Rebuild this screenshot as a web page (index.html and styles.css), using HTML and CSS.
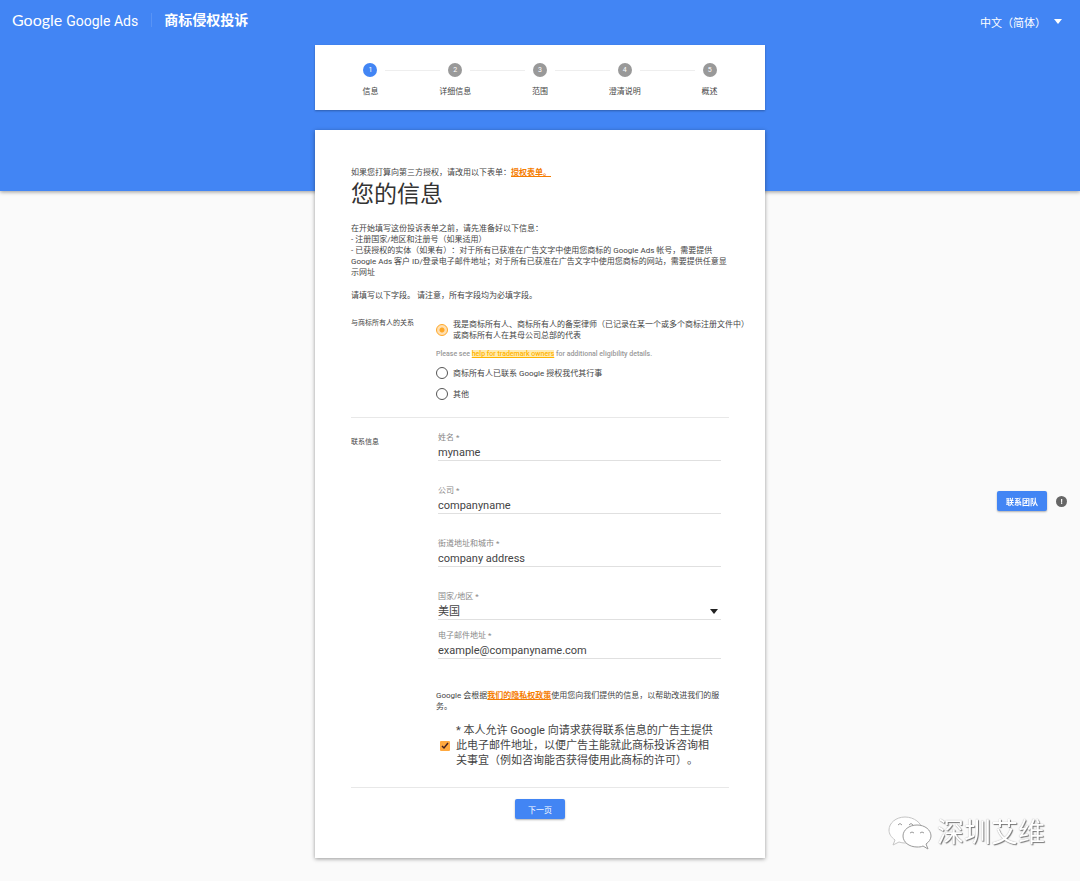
FILE: index.html
```html
<!DOCTYPE html>
<html lang="zh-CN">
  <head>
    <meta charset="UTF-8" />
    <meta name="viewport" content="width=device-width, initial-scale=1.0" />
    <title>商标侵权投诉 - Google Ads</title>
    <link rel="stylesheet" href="styles.css">
  </head>
  <body>
    <header class="hero">
      <div class="topbar">
        <a class="brand" href="#"><span class="logo">Google</span> Google Ads</a>
        <h1 class="page-name">商标侵权投诉</h1>
        <button type="button" class="language">中文（简体）<span class="caret"></span></button>
      </div>
    </header>

    <main class="container">
      <ol class="stepper">
        <li class="step active"><span class="track"><span class="dot">1</span></span>信息</li>
        <li class="step"><span class="track"><span class="dot">2</span></span>详细信息</li>
        <li class="step"><span class="track"><span class="dot">3</span></span>范围</li>
        <li class="step"><span class="track"><span class="dot">4</span></span>澄清说明</li>
        <li class="step"><span class="track"><span class="dot">5</span></span>概述</li>
      </ol>

      <form class="card">
        <p>如果您打算向第三方授权，请改用以下表单：<a class="link" href="#">授权表单。</a></p>
        <h2>您的信息</h2>
        <p class="intro">
          在开始填写这份投诉表单之前，请先准备好以下信息：<br />
          - 注册国家/地区和注册号（如果适用）<br />
          - 已获授权的实体（如果有）：对于所有已获准在广告文字中使用您商标的 Google Ads 帐号，需要提供<br />
          Google Ads 客户 ID/登录电子邮件地址；对于所有已获准在广告文字中使用您商标的网站，需要提供任意显<br />
          示网址
        </p>
        <p class="intro">请填写以下字段。 请注意，所有字段均为必填字段。</p>

        <section class="row relation" role="radiogroup" aria-labelledby="relation-title">
          <h3 id="relation-title">与商标所有人的关系</h3>
          <div class="options">
            <label class="option">
              <input type="radio" name="relation" checked />
              <span>我是商标所有人、商标所有人的备案律师（已记录在某一个或多个商标注册文件中）<br />或商标所有人在其母公司总部的代表</span>
            </label>
            <p class="hint">Please see <a href="#">help for trademark owners</a> for additional eligibility details.</p>
            <label class="option">
              <input type="radio" name="relation" />
              <span>商标所有人已联系 Google 授权我代其行事</span>
            </label>
            <label class="option">
              <input type="radio" name="relation" />
              <span>其他</span>
            </label>
          </div>
        </section>

        <section class="row contact">
          <h3>联系信息</h3>
          <div>
            <div class="field">
              <label for="name">姓名 *</label>
              <input type="text" id="name" value="myname" />
            </div>
            <div class="field">
              <label for="company">公司 *</label>
              <input type="text" id="company" value="companyname" />
            </div>
            <div class="field">
              <label for="address">街道地址和城市 *</label>
              <input type="text" id="address" value="company address" />
            </div>
            <div class="field field-select">
              <label for="country">国家/地区 *</label>
              <select id="country">
                <option>美国</option>
              </select>
            </div>
            <div class="field">
              <label for="email">电子邮件地址 *</label>
              <input type="email" id="email" value="example@companyname.com" />
            </div>

            <p class="privacy">Google 会根据<a class="link" href="#">我们的隐私权政策</a>使用您向我们提供的信息，以帮助改进我们的服务。</p>

            <label class="consent">
              <input type="checkbox" checked />
              <span>* 本人允许 Google 向请求获得联系信息的广告主提供此电子邮件地址，以便广告主能就此商标投诉咨询相关事宜（例如咨询能否获得使用此商标的许可）。</span>
            </label>
          </div>
        </section>

        <div class="actions">
          <button type="button" class="btn">下一页</button>
        </div>
      </form>
    </main>

    <aside class="support">
      <button type="button" class="btn">联系团队</button>
      <span class="info">!</span>
    </aside>

    <div class="watermark">
      <svg width="44" height="36" viewBox="0 0 44 36" fill="#fff" stroke="#999" stroke-width="1">
        <path d="M17 2C8 2 1 8 1 15c0 4 2 7 6 10l-2 5 6-3c3 1 5 1 8 1 9 0 15-6 15-13S26 2 17 2z" stroke="#c4c4c4" />
        <path d="M29 10c-8 0-14 5-14 11s6 11 14 11c2 0 4 0 6-1l5 3-2-5c3-2 5-5 5-8 0-6-6-11-14-11z" />
        <path d="M10 10q2-3 4 0M21 10q2-3 4 0M22 18q2-2 4 0M32 18q2-2 4 0" fill="none" />
      </svg>
      <span>深圳艾维</span>
    </div>
  </body>
</html>
```
FILE: styles.css
```css
* {
  box-sizing: border-box;
}

body {
  margin: 0;
  background-color: #fafafa;
  color: #444;
  font-family: Roboto, "Noto Sans CJK SC", sans-serif;
  font-size: 8px;
  line-height: 11px;
  text-spacing-trim: space-all;
}

h1,
h2,
h3,
p,
ol {
  margin: 0;
  padding: 0;
}

button,
input,
select {
  font-family: inherit;
  margin: 0;
}

.hero {
  background-color: #4285f4;
  min-height: 191px;
  box-shadow: 0 1px 4px rgba(0, 0, 0, 0.4);
}

.topbar {
  display: flex;
  align-items: center;
  height: 40px;
  padding: 0 18px 0 12px;
  color: #fff;
}

.brand {
  display: flex;
  align-items: baseline;
  gap: 4px;
  color: #fff;
  font-size: 14px;
  line-height: 20px;
  text-decoration: none;
}

.logo {
  font-family: Lato, sans-serif;
  font-size: 16px;
}

.page-name {
  margin-left: 13px;
  padding-left: 12px;
  border-left: 1px solid #5893f5;
  font-size: 14px;
  line-height: 14px;
}

.language {
  display: flex;
  align-items: center;
  gap: 8px;
  margin-left: auto;
  padding: 3px 0 0;
  border: none;
  background: none;
  color: #fff;
  font-size: 11px;
  cursor: pointer;
}

.caret {
  border: 4px solid transparent;
  border-top: 5px solid #fff;
  border-bottom: none;
}

.container {
  max-width: 450px;
  margin: -146px auto 22px;
}

.stepper {
  display: flex;
  padding: 18px 13px 13px;
  background-color: #fff;
  list-style: none;
  box-shadow: 0 1px 2px rgba(0, 0, 0, 0.3);
}

.step {
  flex: 1;
  text-align: center;
}

.track {
  display: flex;
  align-items: center;
  gap: 8px;
  margin-bottom: 9px;
}

.track::before,
.track::after {
  content: "";
  flex: 1;
  height: 1px;
  background-color: #eee;
}

.step:first-child .track::before,
.step:last-child .track::after {
  background: none;
}

.dot {
  width: 14px;
  height: 14px;
  border-radius: 50%;
  background-color: #999;
  color: #fff;
  font-size: 7px;
  line-height: 14px;
}

.active .dot {
  background-color: #4285f4;
}

.card {
  margin-top: 20px;
  padding: 37px 36px 39px;
  background-color: #fff;
  box-shadow: 0 1px 4px rgba(0, 0, 0, 0.4);
}

h2 {
  margin: 2px 0 13px;
  color: #333;
  font-size: 23px;
  font-weight: 400;
  line-height: 30px;
}

.intro {
  margin-bottom: 12px;
  white-space: nowrap;
}

.link {
  color: #f57c00;
  font-weight: 700;
}

.row {
  display: grid;
  grid-template-columns: 85px 1fr;
  border-bottom: 1px solid #e8e8e8;
}

h3 {
  font-size: 7px;
  font-weight: 400;
  line-height: 12px;
  white-space: nowrap;
}

.relation {
  padding: 4px 0 17px;
}

.options {
  display: flex;
  flex-direction: column;
  gap: 9px;
  padding-top: 2px;
}

.option {
  display: flex;
  align-items: center;
  gap: 5px;
  white-space: nowrap;
}

.option input {
  appearance: none;
  width: 12px;
  height: 12px;
  border: 1px solid #555;
  border-radius: 50%;
}

.option input:checked {
  border-color: #ffa726;
  background: radial-gradient(#ffa726 2px, #ffe0b2 3px);
}

.hint {
  color: #999;
  font-size: 7px;
  font-weight: 500;
  line-height: 8px;
}

.hint a {
  background-color: #ffecb3;
  color: #ffb300;
}

.contact {
  padding: 14px 8px 19px 0;
}

.contact h3 {
  padding-top: 4px;
}

.field {
  margin: 0 0 24px 2px;
}

.field-select {
  margin-bottom: 10px;
}

.field label {
  display: block;
  color: #888;
  line-height: 12px;
}

.field input,
.field select {
  display: block;
  width: 100%;
  height: 17px;
  padding: 0;
  border: none;
  border-bottom: 1px solid #e0e0e0;
  border-radius: 0;
  background-color: transparent;
  color: #444;
  font-size: 11px;
}

.field select {
  appearance: none;
  background-image: url("data:image/svg+xml,%3Csvg xmlns='http://www.w3.org/2000/svg' viewBox='0 0 8 5'%3E%3Cpath d='M0 0h8L4 5z' fill='%23222'/%3E%3C/svg%3E");
  background-position: right 3px center;
  background-repeat: no-repeat;
  background-size: 8px 5px;
}

.privacy {
  margin: 31px 0 11px;
}

.consent {
  display: flex;
  align-items: center;
  gap: 6px;
  padding: 0 2px 0 4px;
  font-size: 11px;
  line-height: 15px;
}

.consent input {
  flex: none;
  appearance: none;
  width: 10px;
  height: 10px;
  border-radius: 1px;
  background: #ffa940 url("data:image/svg+xml,%3Csvg xmlns='http://www.w3.org/2000/svg' viewBox='0 0 10 10'%3E%3Cpath d='M2 5l2 2 4-5' fill='none' stroke='%23422' stroke-width='1.5'/%3E%3C/svg%3E");
}

.actions {
  padding-top: 11px;
  text-align: center;
}

.btn {
  width: 50px;
  height: 20px;
  padding: 0;
  border: none;
  border-radius: 2px;
  background-color: #4285f4;
  box-shadow: 0 1px 2px rgba(0, 0, 0, 0.3);
  color: #fff;
  font-size: 8px;
  cursor: pointer;
}

.support {
  position: fixed;
  top: 491px;
  right: 13px;
  display: flex;
  align-items: center;
  gap: 9px;
}

.support .btn {
  font-weight: 700;
}

.info {
  width: 11px;
  border-radius: 50%;
  background-color: #666;
  color: #fff;
  font-weight: 700;
  text-align: center;
}

.watermark {
  position: fixed;
  right: 35px;
  bottom: 28px;
  display: flex;
  align-items: center;
  gap: 5px;
  color: #fff;
  font-size: 27px;
  line-height: 40px;
  text-shadow: 1px 1px 1px #777, 0 0 1px #999;
}
```
